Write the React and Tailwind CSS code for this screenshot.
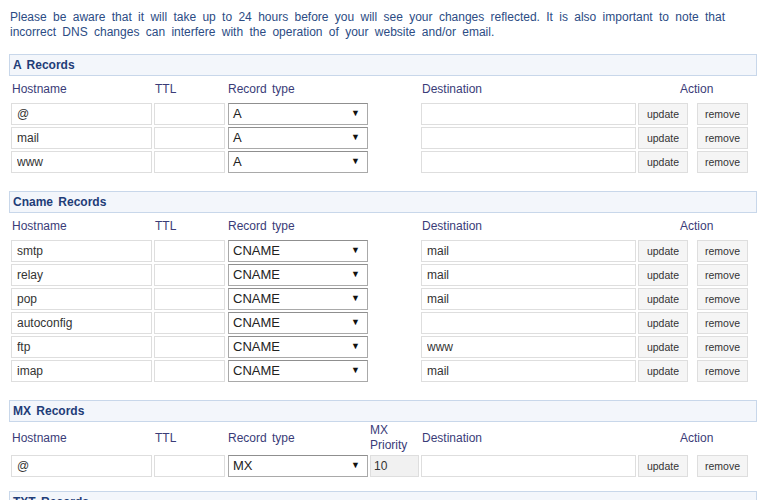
import React from "react";

const aRows = [
  { host: "@", type: "A", dest: "" },
  { host: "mail", type: "A", dest: "" },
  { host: "www", type: "A", dest: "" },
];

const cnameRows = [
  { host: "smtp", type: "CNAME", dest: "mail" },
  { host: "relay", type: "CNAME", dest: "mail" },
  { host: "pop", type: "CNAME", dest: "mail" },
  { host: "autoconfig", type: "CNAME", dest: "" },
  { host: "ftp", type: "CNAME", dest: "www" },
  { host: "imap", type: "CNAME", dest: "mail" },
];

const mxRows = [{ host: "@", type: "MX", priority: "10", dest: "" }];

const Field = ({ value, className }) => (
  <input
    readOnly
    value={value}
    className={`h-[22px] border border-[#dedede] text-[12px] text-[#333] outline-none ${className}`}
  />
);

const SelectBox = ({ value }) => (
  <div className="ml-[3px] flex h-[22px] w-[140px] items-center justify-between border border-[#a9a9a9] border-t-[#8f8f8f] bg-white pl-[4px] pr-[7px] text-[13px] text-[#222]">
    <span>{value}</span>
    <span className="text-[9px] text-[#111]">▼</span>
  </div>
);

const Btn = ({ label, className }) => (
  <button className={`h-[22px] border border-[#dedede] bg-[#f5f5f5] pt-[2px] text-[10.5px] text-[#333] ${className}`}>
    {label}
  </button>
);

const ColumnHeads = ({ mx }) => (
  <div
    className={`flex items-center text-[12px] text-[#3a3c78] [word-spacing:2px] ${
      mx ? "h-[31px]" : "h-[25px]"
    }`}
  >
    <div className="ml-[2px] w-[141px] pl-[1px]">Hostname</div>
    <div className="ml-[2px] w-[71px] pl-[1px]">TTL</div>
    <div className="ml-[3px] w-[140px]">Record type</div>
    <div className="ml-[2px] w-[49px] leading-[15px]">
      {mx && (
        <>
          MX
          <br />
          Priority
        </>
      )}
    </div>
    <div className="ml-[2px] w-[215px] pl-[1px]">Destination</div>
    <div className="ml-[2px] w-[110px] pl-[42px]">Action</div>
  </div>
);

const Row = ({ r, mx }) => (
  <div className="flex items-center">
    <Field value={r.host} className="ml-[2px] w-[141px] bg-white pl-[5px]" />
    <Field value="" className="ml-[2px] w-[71px] bg-white" />
    <SelectBox value={r.type} />
    {mx ? (
      <Field value={r.priority} className="ml-[2px] w-[49px] bg-[#f1f1f1] pl-[3px]" />
    ) : (
      <div className="ml-[2px] w-[49px]" />
    )}
    <Field value={r.dest} className="ml-[2px] w-[215px] bg-white pl-[5px]" />
    <Btn label="update" className="ml-[2px] w-[50px]" />
    <Btn label="remove" className="ml-[9px] w-[51px]" />
  </div>
);

const Section = ({ title, rows, mx, className }) => (
  <div className={className}>
    <div className="flex h-[22px] items-center border border-[#c8d7ea] bg-[#f3f6fb] px-[3px] text-[12px] font-bold text-[#1f3d78] [word-spacing:2px]">
      {title}
    </div>
    <ColumnHeads mx={mx} />
    <div className="flex flex-col gap-[2px] pt-[2px]">
      {rows.map((r, i) => (
        <Row key={i} r={r} mx={mx} />
      ))}
    </div>
  </div>
);

export default function App() {
  return (
    <div className="h-[500px] w-[768px] overflow-hidden bg-white pl-[9px] pt-[10px] font-['Liberation_Sans',Arial,sans-serif]">
      <div className="w-[748px]">
        <p className="pl-[1px] text-[12px] leading-[15px] text-[#2c4c84] [word-spacing:3px]">
          Please be aware that it will take up to 24 hours before you will see your changes reflected. It is also
          important to note that incorrect DNS changes can interfere with the operation of your website and/or email.
        </p>
        <Section title="A Records" rows={aRows} className="mt-[14px]" />
        <Section title="Cname Records" rows={cnameRows} className="mt-[18px]" />
        <Section title="MX Records" rows={mxRows} mx className="mt-[18px]" />
        <Section title="TXT Records" rows={[]} className="mt-[14px]" />
      </div>
    </div>
  );
}
